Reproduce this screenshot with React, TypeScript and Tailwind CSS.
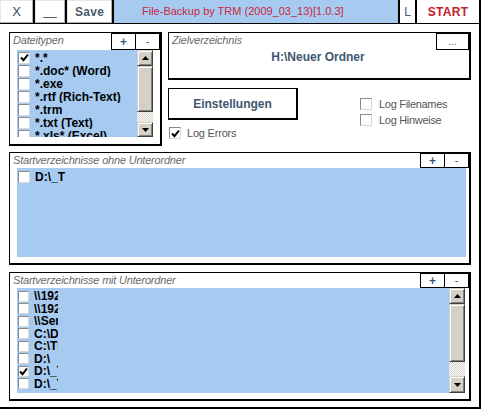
import React from "react";

const Check = () => (
  <svg width="9" height="9" viewBox="0 0 9 9" className="block">
    <path d="M1 4.5 L3.5 7.2 L8 1.5" stroke="#000" strokeWidth="2" fill="none" />
  </svg>
);

const Box = ({ checked, size = "w-[12px] h-[12px]" }: { checked?: boolean; size?: string }) => (
  <div
    className={`${size} shrink-0 bg-white border border-t-[#8a8a8a] border-l-[#8a8a8a] border-r-[#d8d8d8] border-b-[#d8d8d8] flex items-center justify-center`}
  >
    {checked ? <Check /> : null}
  </div>
);

const Arrow = ({ up }: { up?: boolean }) => (
  <svg width="7" height="4" viewBox="0 0 7 4" className="block">
    {up ? <path d="M0 4 L3.5 0 L7 4 Z" fill="#000" /> : <path d="M0 0 L3.5 4 L7 0 Z" fill="#000" />}
  </svg>
);

const raised =
  "bg-[#d4d0c8] border border-t-[#d4d0c8] border-l-[#d4d0c8] border-r-[#404040] border-b-[#404040] shadow-[inset_1px_1px_0_#ffffff,inset_-1px_-1px_0_#808080]";

const ScrollBar = ({ thumb, track }: { thumb: number; track: number }) => (
  <div className="w-[16px] h-full flex flex-col shrink-0">
    <div className={`${raised} h-[16px] flex items-center justify-center`}>
      <Arrow up />
    </div>
    <div className={`${raised}`} style={{ height: thumb }} />
    <div
      className="bg-[repeating-conic-gradient(#d4d0c8_0_25%,#ffffff_0_50%)] bg-[length:2px_2px]"
      style={{ height: track }}
    />
    <div className={`${raised} flex-1 flex items-center justify-center`}>
      <Arrow />
    </div>
  </div>
);

const PlusMinus = ({ h = "h-[17px]" }: { h?: string }) => (
  <div className="flex">
    <div className={`w-[25px] ${h} bg-white border border-black flex items-center justify-center text-[12px] font-bold text-[#3e566e] leading-none`}>
      +
    </div>
    <div className={`w-[24px] ${h} bg-white border border-l-0 border-black flex items-center justify-center text-[11px] text-[#3e566e] leading-none`}>
      -
    </div>
  </div>
);

const Label = ({ children }: { children: React.ReactNode }) => (
  <span className="italic text-[11px] text-[#6a6a6a] leading-none pl-[3px] pt-[2px] tracking-[-0.2px]">{children}</span>
);

const Row = ({ checked, text, h, clip, box }: { checked?: boolean; text: string; h: string; clip?: string; box?: string }) => (
  <div className={`flex items-center ${h} pl-[1px]`}>
    <Box checked={checked} size={box} />
    <div className={`ml-[5px] overflow-hidden whitespace-nowrap ${clip ?? ""} text-[12px] font-bold text-black leading-none`}>
      {text}
    </div>
  </div>
);

export default function App() {
  const types = [
    { t: "*.*", c: true },
    { t: "*.doc* (Word)" },
    { t: "*.exe" },
    { t: "*.rtf (Rich-Text)" },
    { t: "*.trm" },
    { t: "*.txt (Text)" },
    { t: "*.xls* (Excel)" },
  ];
  const mit = [
    { t: "\\\\192.168.2.10\\Backup" },
    { t: "\\\\192.168.2.11\\Daten" },
    { t: "\\\\Server\\Share" },
    { t: "C:\\Dokumente" },
    { t: "C:\\TRM" },
    { t: "D:\\" },
    { t: "D:\\_Test", c: true },
    { t: "D:\\_Tools" },
  ];
  return (
    <div className="w-[481px] h-[409px] bg-white border-r-2 border-b-2 border-black font-['Liberation_Sans',Arial,sans-serif] overflow-hidden">
      {/* title bar */}
      <div className="flex h-[24px] border-b border-black">
        <div className="w-[35px] h-full border-r-2 border-black bg-white shadow-[inset_-1px_-1px_0_#b0b0b0,inset_1px_1px_0_#e8e8e8] flex items-center justify-center text-[13px] text-[#3a4a5a]">
          X
        </div>
        <div className="w-[32px] h-full border-r-2 border-black bg-white shadow-[inset_-1px_-1px_0_#b0b0b0,inset_1px_1px_0_#e8e8e8] flex items-center justify-center text-[12px] text-[#3a4a5a] pb-[2px]">
          __
        </div>
        <div className="w-[47px] h-full border-r-2 border-black bg-white shadow-[inset_-1px_-1px_0_#b0b0b0,inset_1px_1px_0_#e8e8e8] flex items-center justify-center text-[12px] font-bold text-[#4a5c6e] tracking-[0.3px]">
          Save
        </div>
        <div className="flex-1 h-full bg-[#a6caf0] flex items-center pl-[28px] text-[11px] text-[#c8283c] whitespace-nowrap">
          File-Backup by TRM (2009_03_13)[1.0.3]
        </div>
        <div className="w-[17px] h-full border-l-2 border-black bg-white flex items-center justify-center text-[12px] text-[#4a5a6a]">
          L
        </div>
        <div className="w-[64px] h-full border-l-2 border-black bg-white flex items-center justify-center text-[12px] font-bold text-[#c42030] tracking-[0.3px]">
          START
        </div>
      </div>

      {/* body */}
      <div className="pl-[9px] pr-[8px] pt-[8px] flex flex-col">
        <div className="flex gap-[6px]">
          {/* Dateitypen */}
          <div className="w-[153px] h-[114px] border border-black border-r-2 border-b-2 flex flex-col">
            <div className="flex justify-between items-start h-[17px]">
              <Label>Dateitypen</Label>
              <PlusMinus />
            </div>
            <div className="ml-[7px] w-[136px] h-[87px] flex bg-[#a6caf0]">
              <div className="flex-1 overflow-hidden pt-[1px]">
                {types.map((r, i) => (
                  <Row key={i} checked={r.c} text={r.t} h="h-[13px]" />
                ))}
              </div>
              <ScrollBar thumb={46} track={10} />
            </div>
          </div>

          {/* right section */}
          <div className="flex-1 flex flex-col">
            <div className="h-[48px] border border-black border-r-2 border-b-2 flex flex-col">
              <div className="flex justify-between items-start h-[17px]">
                <Label>Zielverzeichnis</Label>
                <div className="w-[33px] h-[17px] bg-white border border-black flex items-center justify-center text-[10px] text-[#6a6a6a] leading-none">
                  ...
                </div>
              </div>
              <div className="text-center text-[12px] font-bold text-[#3e566e] leading-none pr-[2px] pt-[1px]">H:\Neuer Ordner</div>
            </div>
            <div className="flex mt-[8px] gap-[62px]">
              <div className="flex flex-col">
                <div className="w-[130px] h-[32px] border border-black border-r-2 border-b-2 flex items-center justify-center text-[12px] font-bold text-[#3e566e]">
                  Einstellungen
                </div>
                <div className="flex items-center mt-[5px] ml-[1px] gap-[6px]">
                  <Box checked />
                  <span className="text-[11px] text-[#555] tracking-[-0.2px]">Log Errors</span>
                </div>
              </div>
              <div className="flex flex-col pt-[10px] gap-[4px]">
                <div className="flex items-center gap-[7px]">
                  <Box />
                  <span className="text-[11px] text-[#555] tracking-[-0.3px] leading-none">Log Filenames</span>
                </div>
                <div className="flex items-center gap-[7px]">
                  <Box />
                  <span className="text-[11px] text-[#555] tracking-[-0.3px] leading-none">Log Hinweise</span>
                </div>
              </div>
            </div>
          </div>
        </div>

        {/* ohne Unterordner */}
        <div className="mt-[6px] h-[113px] border border-black border-r-2 border-b-2 flex flex-col">
          <div className="flex justify-between items-start h-[15px]">
            <Label>Startverzeichnisse ohne Unterordner</Label>
            <PlusMinus h="h-[15px]" />
          </div>
          <div className="ml-[7px] mr-[3px] h-[89px] bg-[#a6caf0] pt-[2px]">
            <Row text="D:\_T" h="h-[13px]" clip="w-[32px]" />
          </div>
        </div>

        {/* mit Unterordner */}
        <div className="mt-[7px] h-[129px] border border-black border-r-2 border-b-2 flex flex-col">
          <div className="flex justify-between items-start h-[15px]">
            <Label>Startverzeichnisse mit Unterordner</Label>
            <PlusMinus h="h-[15px]" />
          </div>
          <div className="ml-[7px] mr-[4px] h-[105px] bg-[#a6caf0] flex">
            <div className="flex-1 overflow-hidden pt-[2px]">
              {mit.map((r, i) => (
                <Row key={i} checked={r.c} text={r.t} h="h-[12.5px]" clip="w-[24px]" box="w-[11px] h-[11px]" />
              ))}
            </div>
            <ScrollBar thumb={58} track={14} />
          </div>
        </div>
      </div>
    </div>
  );
}
